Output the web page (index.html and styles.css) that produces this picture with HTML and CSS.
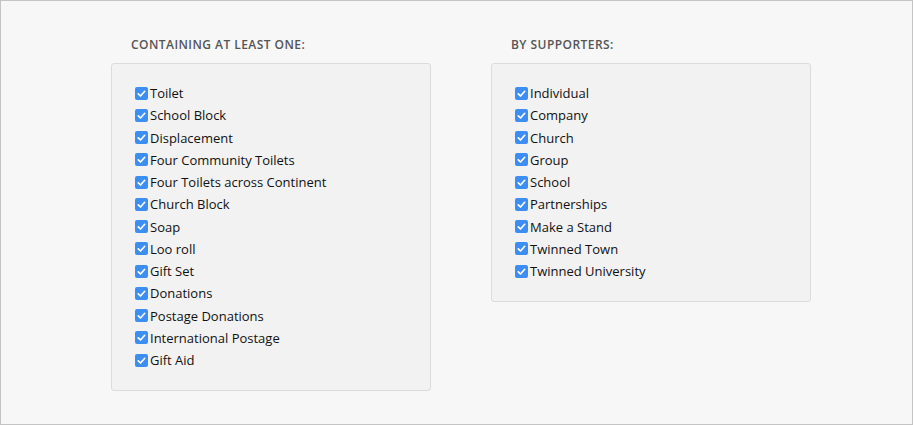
FILE: index.html
```html
<!DOCTYPE html>
<html>
<head>
<meta charset="utf-8">
<link rel="stylesheet" href="styles.css">
</head>
<body>
<div class="frame">
  <div class="filters">
    <section class="group">
      <h3 class="group-title">Containing at least one:</h3>
      <div class="panel">
        <ul class="checks">
          <li><span class="box"><svg viewBox="0 0 13 13"><path d="M3.3 6.8 L5.5 9 L9.7 4.3" /></svg></span>Toilet</li>
          <li><span class="box"><svg viewBox="0 0 13 13"><path d="M3.3 6.8 L5.5 9 L9.7 4.3" /></svg></span>School Block</li>
          <li><span class="box"><svg viewBox="0 0 13 13"><path d="M3.3 6.8 L5.5 9 L9.7 4.3" /></svg></span>Displacement</li>
          <li><span class="box"><svg viewBox="0 0 13 13"><path d="M3.3 6.8 L5.5 9 L9.7 4.3" /></svg></span>Four Community Toilets</li>
          <li><span class="box"><svg viewBox="0 0 13 13"><path d="M3.3 6.8 L5.5 9 L9.7 4.3" /></svg></span>Four Toilets across Continent</li>
          <li><span class="box"><svg viewBox="0 0 13 13"><path d="M3.3 6.8 L5.5 9 L9.7 4.3" /></svg></span>Church Block</li>
          <li><span class="box"><svg viewBox="0 0 13 13"><path d="M3.3 6.8 L5.5 9 L9.7 4.3" /></svg></span>Soap</li>
          <li><span class="box"><svg viewBox="0 0 13 13"><path d="M3.3 6.8 L5.5 9 L9.7 4.3" /></svg></span>Loo roll</li>
          <li><span class="box"><svg viewBox="0 0 13 13"><path d="M3.3 6.8 L5.5 9 L9.7 4.3" /></svg></span>Gift Set</li>
          <li><span class="box"><svg viewBox="0 0 13 13"><path d="M3.3 6.8 L5.5 9 L9.7 4.3" /></svg></span>Donations</li>
          <li><span class="box"><svg viewBox="0 0 13 13"><path d="M3.3 6.8 L5.5 9 L9.7 4.3" /></svg></span>Postage Donations</li>
          <li><span class="box"><svg viewBox="0 0 13 13"><path d="M3.3 6.8 L5.5 9 L9.7 4.3" /></svg></span>International Postage</li>
          <li><span class="box"><svg viewBox="0 0 13 13"><path d="M3.3 6.8 L5.5 9 L9.7 4.3" /></svg></span>Gift Aid</li>
        </ul>
      </div>
    </section>
    <section class="group">
      <h3 class="group-title">By supporters:</h3>
      <div class="panel">
        <ul class="checks">
          <li><span class="box"><svg viewBox="0 0 13 13"><path d="M3.3 6.8 L5.5 9 L9.7 4.3" /></svg></span>Individual</li>
          <li><span class="box"><svg viewBox="0 0 13 13"><path d="M3.3 6.8 L5.5 9 L9.7 4.3" /></svg></span>Company</li>
          <li><span class="box"><svg viewBox="0 0 13 13"><path d="M3.3 6.8 L5.5 9 L9.7 4.3" /></svg></span>Church</li>
          <li><span class="box"><svg viewBox="0 0 13 13"><path d="M3.3 6.8 L5.5 9 L9.7 4.3" /></svg></span>Group</li>
          <li><span class="box"><svg viewBox="0 0 13 13"><path d="M3.3 6.8 L5.5 9 L9.7 4.3" /></svg></span>School</li>
          <li><span class="box"><svg viewBox="0 0 13 13"><path d="M3.3 6.8 L5.5 9 L9.7 4.3" /></svg></span>Partnerships</li>
          <li><span class="box"><svg viewBox="0 0 13 13"><path d="M3.3 6.8 L5.5 9 L9.7 4.3" /></svg></span>Make a Stand</li>
          <li><span class="box"><svg viewBox="0 0 13 13"><path d="M3.3 6.8 L5.5 9 L9.7 4.3" /></svg></span>Twinned Town</li>
          <li><span class="box"><svg viewBox="0 0 13 13"><path d="M3.3 6.8 L5.5 9 L9.7 4.3" /></svg></span>Twinned University</li>
        </ul>
      </div>
    </section>
  </div>
</div>
</body>
</html>
```

FILE: styles.css
```css
html, body {
  margin: 0;
  padding: 0;
}
body {
  font-family: "Open Sans", "Liberation Sans", sans-serif;
  color: #111;
}
.frame {
  box-sizing: border-box;
  width: 913px;
  height: 425px;
  border: 1px solid #c4c4c4;
  background: #f7f7f7;
  padding: 36px 0 0 110px;
}
.filters {
  display: flex;
  gap: 60px;
  align-items: flex-start;
}
.group {
  width: 320px;
}
.group-title {
  margin: 0 0 10px 20px;
  font-size: 12px;
  line-height: 16px;
  font-weight: 600;
  letter-spacing: 0.45px;
  text-transform: uppercase;
  color: #555;
}
.panel {
  background: #f2f2f2;
  border: 1px solid #dcdcdc;
  border-radius: 3px;
  padding: 18px 0 19px 23px;
}
.checks {
  list-style: none;
  margin: 0;
  padding: 0;
}
.checks li {
  display: flex;
  align-items: center;
  font-size: 13px;
  line-height: 22.25px;
  height: 22.25px;
}
.box {
  width: 13px;
  height: 13px;
  border-radius: 2px;
  background: #3d8ef2;
  margin-right: 2px;
  display: flex;
}
.box svg {
  width: 13px;
  height: 13px;
}
.box path {
  fill: none;
  stroke: #fff;
  stroke-width: 1.7;
  stroke-linecap: round;
  stroke-linejoin: round;
}
```
